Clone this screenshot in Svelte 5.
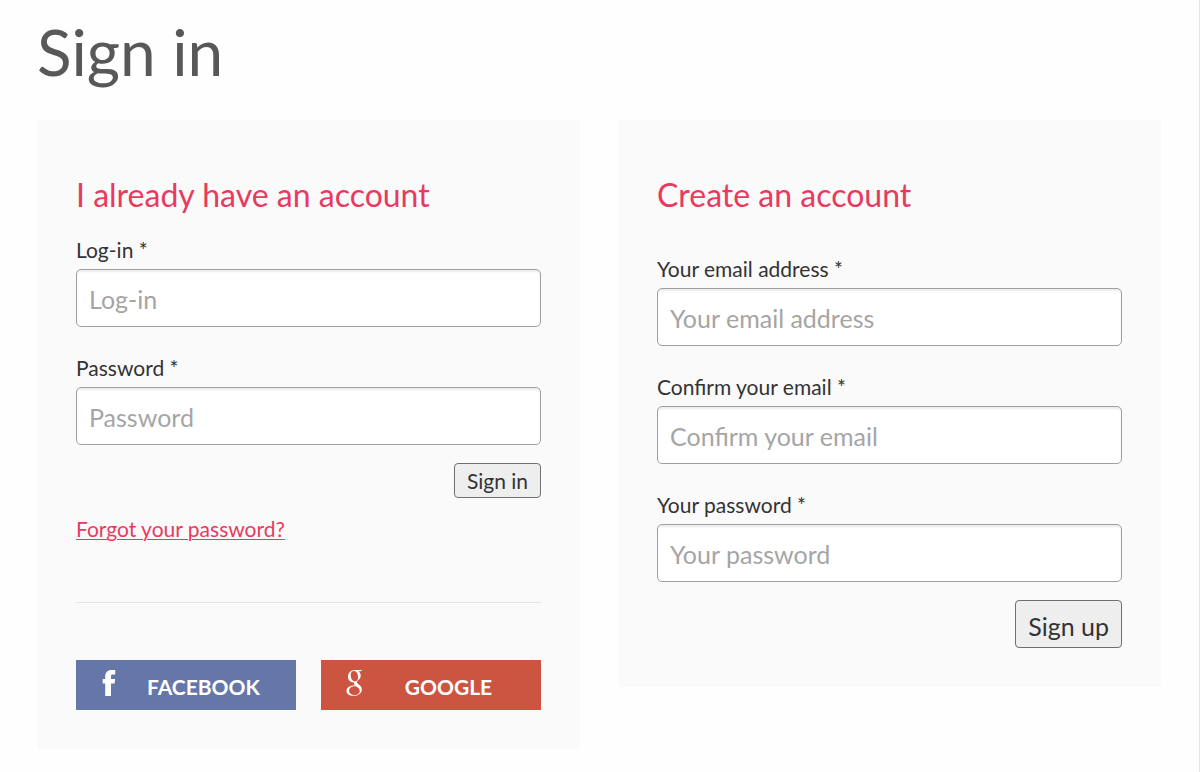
<script lang="ts">
  type Field = { id: string; label: string; type: "text" | "email" | "password" };

  const loginFields: Field[] = [
    { id: "login", label: "Log-in", type: "text" },
    { id: "password", label: "Password", type: "password" },
  ];

  const signupFields: Field[] = [
    { id: "email", label: "Your email address", type: "email" },
    { id: "email-confirm", label: "Confirm your email", type: "email" },
    { id: "new-password", label: "Your password", type: "password" },
  ];

  function submit(event: SubmitEvent) {
    event.preventDefault();
  }
</script>

{#snippet fieldList(fields: Field[])}
  <div class="fields">
    {#each fields as field (field.id)}
      <div class="field">
        <label for={field.id}>{field.label} *</label>
        <input id={field.id} type={field.type} placeholder={field.label} />
      </div>
    {/each}
  </div>
{/snippet}

<main>
  <h1>Sign in</h1>

  <div class="columns">
    <section class="card">
      <h2>I already have an account</h2>
      <form onsubmit={submit}>
        {@render fieldList(loginFields)}
        <button class="submit" type="submit">Sign in</button>
      </form>
      <a href="#forgot">Forgot your password?</a>
      <hr />
      <div class="social">
        <button class="facebook" type="button">
          <svg viewBox="0 0 30 28" aria-hidden="true">
            <path
              fill="currentColor"
              d="M11.200 27V14.400H8.700V10h2.500V7.500C11.200 3.400 13.600 1 17.600 1h3.600v4.600h-2.400c-1.300 0-1.800.6-1.800 1.800V10h4.100l-.5 4.400H17V27z"
            />
          </svg>
          <span>Facebook</span>
        </button>
        <button class="google" type="button">
          <svg viewBox="0 0 30 28" aria-hidden="true">
            <path
              fill="currentColor"
              fill-rule="evenodd"
              d="M23.500 1l-2 1.200h-2.100c1.500 1 2.300 2.600 2.300 4.400 0 2.100-.9 3.500-2.500 4.700-1 .8-1.300 1.300-1.300 1.900 0 .7.6 1.200 1.600 2 2.200 1.600 3.300 3 3.300 5.200 0 3.600-3.400 6.400-8.200 6.400-4.200 0-7.100-1.900-7.100-4.900 0-3.600 3.600-5.500 8.500-5.700-.7-.7-1.100-1.400-1-2.700-3.400.2-6-2.200-6-5.700C9 3.900 11.900 1 16 1zM15 2.100c-2 0-3.300 1.600-3.300 4 0 3.300 1.700 6.300 4.200 6.300 2 0 3.200-1.500 3.200-3.800 0-3.100-1.500-6.500-4.100-6.500zM16.400 17.200c-4 .1-6.300 1.700-6.300 4.500 0 2.600 2.300 4.200 5.700 4.200 3.300 0 5-1.500 5-3.900 0-1.900-1.200-2.800-3.700-4.700z"
            />
          </svg>
          <span>Google</span>
        </button>
      </div>
    </section>

    <section class="card signup">
      <h2>Create an account</h2>
      <form onsubmit={submit}>
        {@render fieldList(signupFields)}
        <button class="submit large" type="submit">Sign up</button>
      </form>
    </section>
  </div>
</main>

<style>
  :global(body) {
    margin: 0;
    background: #fefefe;
  }
  main {
    box-sizing: border-box;
    min-height: 100vh;
    padding: 12px 38px 23px 37px;
    border-right: 1px solid #e4e4e4;
    font-family: Lato, sans-serif;
    color: #333;
  }
  h1 {
    margin: 0 0 28px;
    font-size: 64px;
    font-weight: 400;
    line-height: 80px;
    color: #585858;
  }
  .columns {
    display: grid;
    grid-template-columns: 1fr 1fr;
    align-items: start;
    gap: 38px;
  }
  .card {
    padding: 55px 39px 39px;
    background: #fafafa;
  }
  h2 {
    margin: 0 0 22px;
    font-size: 32px;
    font-weight: 400;
    line-height: 40px;
    color: #e83a5f;
  }
  .signup h2 {
    margin-bottom: 41px;
  }
  form {
    display: flex;
    flex-direction: column;
    gap: 18px;
  }
  .fields {
    display: flex;
    flex-direction: column;
    gap: 28px;
  }
  .field {
    display: flex;
    flex-direction: column;
    gap: 6px;
  }
  label {
    font-size: 21px;
    line-height: 26px;
  }
  input {
    box-sizing: border-box;
    width: 100%;
    height: 58px;
    padding: 2px 12px 0;
    border: 1px solid #a0a0a0;
    border-radius: 5px;
    background: #fff;
    box-shadow: inset 0 2px 2px rgba(0, 0, 0, 0.08);
    font: inherit;
    font-size: 25px;
    color: #333;
  }
  input::placeholder {
    color: #a5a5a5;
    opacity: 1;
  }
  button {
    font: inherit;
    cursor: pointer;
  }
  .submit {
    align-self: flex-end;
    padding: 2px 12px 1px;
    border: 1px solid #707070;
    border-radius: 4px;
    background: #eee;
    font-size: 21px;
    line-height: 30px;
    color: #333;
  }
  .submit.large {
    padding: 5px 12px 1px;
    font-size: 25px;
    line-height: 40px;
  }
  a {
    display: inline-block;
    margin-top: 17px;
    font-size: 21px;
    line-height: 28px;
    color: #e83a5f;
    text-decoration-thickness: 1px;
    text-underline-offset: 2px;
  }
  hr {
    margin: 59px 0 57px;
    border: 0;
    border-top: 1px solid #e4e4e4;
  }
  .social {
    display: grid;
    grid-template-columns: 1fr 1fr;
    gap: 25px;
  }
  .social button {
    display: flex;
    align-items: center;
    height: 50px;
    padding: 0 13px 0 18px;
    border: 0;
    font-size: 21px;
    font-weight: 700;
    text-transform: uppercase;
    color: #fff;
  }
  .social svg {
    width: 30px;
    height: 28px;
    margin-bottom: 4px;
  }
  .social span {
    flex: 1;
    padding-top: 2px;
    text-align: center;
  }
  .facebook {
    background: #6577a8;
  }
  .google {
    background: #cb5541;
  }
  @media (max-width: 800px) {
    .columns {
      grid-template-columns: 1fr;
    }
  }
</style>
